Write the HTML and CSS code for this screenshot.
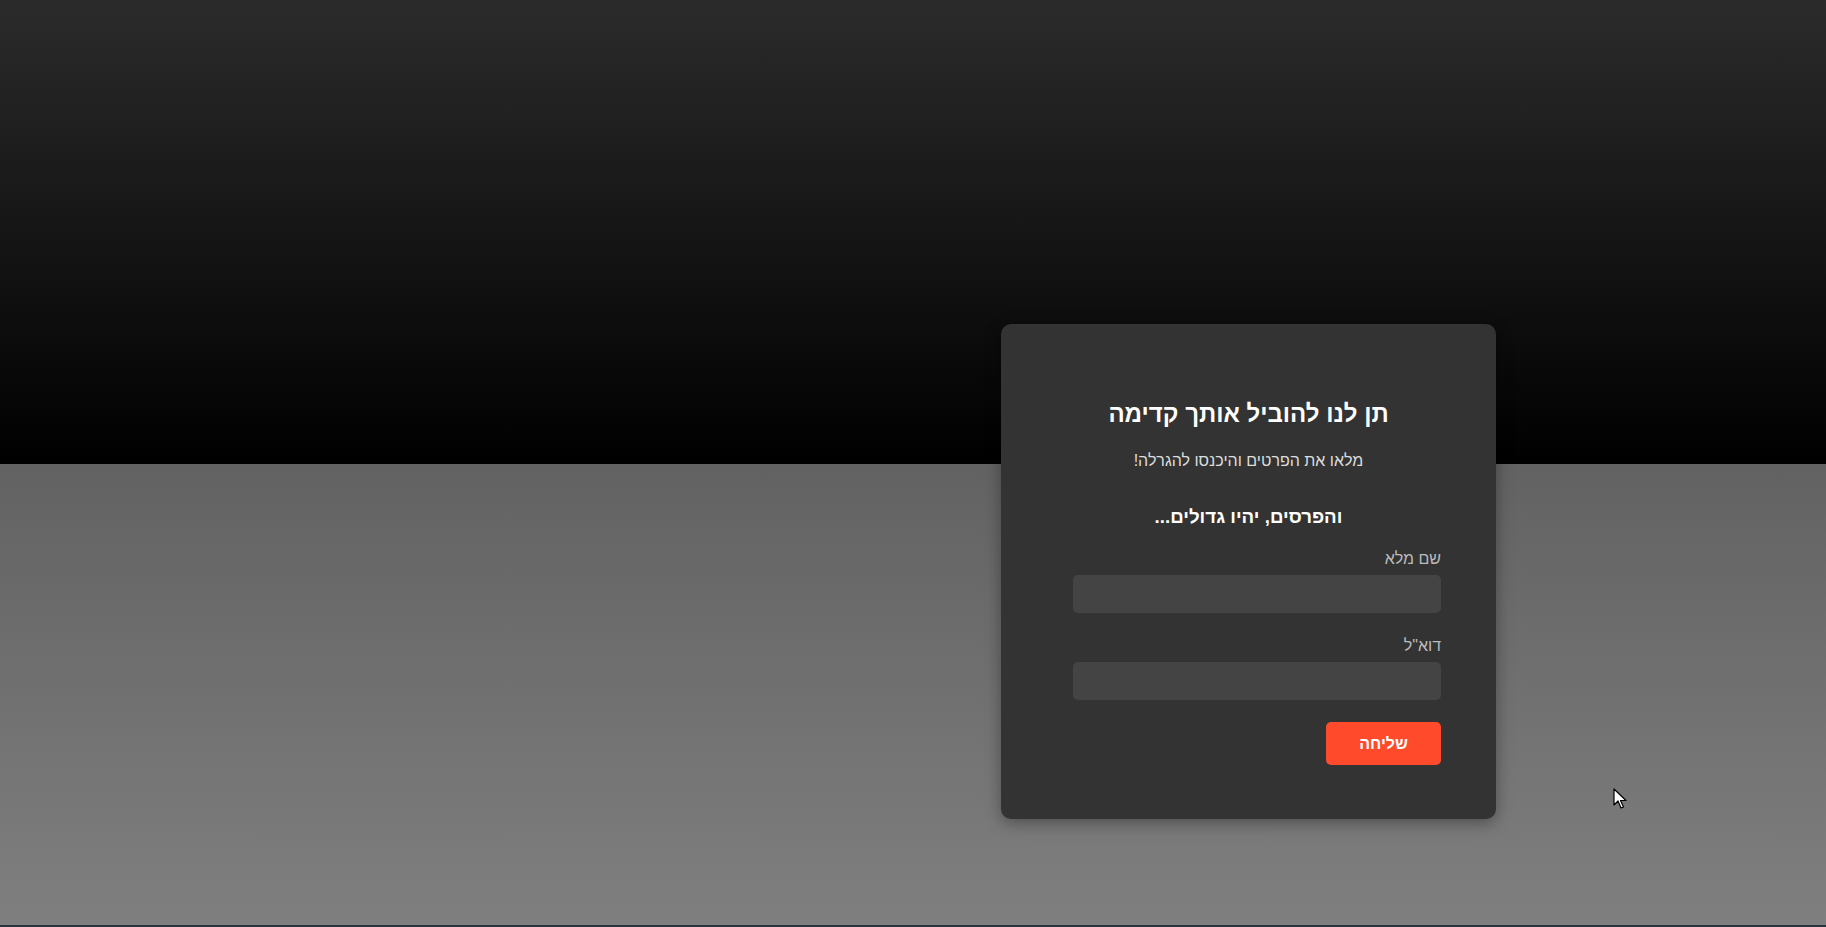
FILE: index.html
```html
<!DOCTYPE html>
<html lang="he" dir="rtl">
<head>
<meta charset="utf-8">
<title>הגרלה</title>
<link rel="stylesheet" href="styles.css">
</head>
<body>
<main class="page">
  <section class="card">
    <h1 class="title">תן לנו להוביל אותך קדימה</h1>
    <p class="subtitle">מלאו את הפרטים והיכנסו להגרלה!</p>
    <h3 class="tagline">והפרסים, יהיו גדולים...</h3>
    <form class="form">
      <label class="field">
        <span class="label">שם מלא</span>
        <input class="input" type="text">
      </label>
      <label class="field">
        <span class="label">דוא"ל</span>
        <input class="input" type="email">
      </label>
      <button class="submit" type="button">שליחה</button>
    </form>
  </section>
  <svg class="cursor" width="14" height="22" viewBox="0 0 14 22"><path d="M1 1 L1 17 L5 13 L8 20 L10.5 19 L7.5 12.5 L13 12.5 Z" fill="#fff" stroke="#000" stroke-width="1.2" stroke-linejoin="round"/></svg>
</main>
</body>
</html>
```

FILE: styles.css
```css
* { box-sizing: border-box; }
html, body { margin: 0; padding: 0; }
body {
  height: 927px;
  overflow: hidden;
  font-family: "Liberation Sans", Arial, sans-serif;
  background: linear-gradient(to bottom, #2b2b2b 0px, #000 464px, #626262 464px, #7f7f7f 925px, #273540 925px, #273540 927px);
}
.page {
  position: relative;
  height: 927px;
  display: flex;
  flex-direction: row;
  justify-content: flex-start;
  align-items: flex-start;
  padding-top: 324px;
  padding-right: 330px;
}
.card {
  width: 495px;
  height: 495px;
  background: #333333;
  border-radius: 10px;
  box-shadow: 0 4px 16px rgba(0,0,0,0.35);
  padding: 76px 55px 0 55px;
  text-align: center;
  color: #fff;
}
.title {
  margin: 0;
  font-size: 24px;
  font-weight: 700;
  line-height: 28px;
}
.subtitle {
  margin: 24px 0 0;
  font-size: 16px;
  line-height: 18px;
  color: #dddddd;
}
.tagline {
  margin: 36px 0 0;
  font-size: 18.72px;
  font-weight: 700;
  line-height: 22px;
}
.form {
  width: 368px;
  margin-top: 22px;
  display: flex;
  flex-direction: column;
  align-items: flex-start;
}
.field {
  display: flex;
  flex-direction: column;
  align-items: flex-start;
  width: 100%;
  margin-bottom: 24px;
}
.field:last-of-type { margin-bottom: 22px; }
.label {
  font-size: 16px;
  line-height: 18px;
  color: #bbbbbb;
  margin-bottom: 7px;
}
.input {
  width: 100%;
  height: 38px;
  border: none;
  border-radius: 5px;
  background: #444444;
  color: #fff;
  font-family: inherit;
  font-size: 16px;
  padding: 0 10px;
}
.submit {
  width: 115px;
  height: 43px;
  border: none;
  border-radius: 5px;
  background: #ff4b2b;
  color: #fff;
  font-family: inherit;
  font-size: 16px;
  font-weight: 700;
}
.cursor {
  position: absolute;
  left: 1613px;
  top: 788px;
}
```
